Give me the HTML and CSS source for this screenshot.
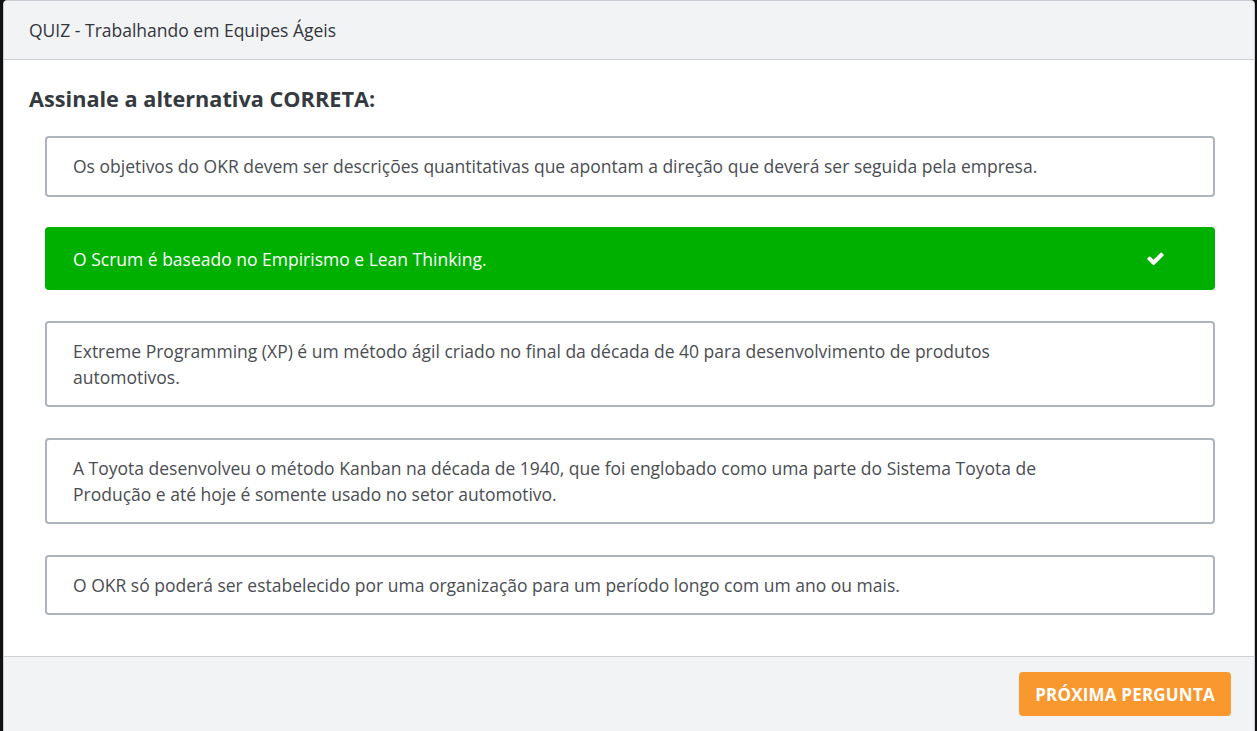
FILE: index.html
```html
<!DOCTYPE html>
<html lang="pt-BR">
<head>
<meta charset="utf-8">
<title>QUIZ - Trabalhando em Equipes Ágeis</title>
<link rel="stylesheet" href="styles.css">
</head>
<body>
<div class="modal">
  <div class="modal-header">QUIZ - Trabalhando em Equipes Ágeis</div>
  <div class="modal-body">
    <h2 class="question">Assinale a alternativa CORRETA:</h2>
    <ul class="options">
      <li class="option"><span class="option-text">Os objetivos do OKR devem ser descrições quantitativas que apontam a direção que deverá ser seguida pela empresa.</span></li>
      <li class="option correct"><span class="option-text">O Scrum é baseado no Empirismo e Lean Thinking.</span>
        <svg class="check" viewBox="0 0 1792 1792" width="19" height="19" aria-hidden="true"><path fill="#fff" d="M1671 566q0 40-28 68l-724 724-136 136q-28 28-68 28t-68-28l-136-136-362-362q-28-28-28-68t28-68l136-136q28-28 68-28t68 28l294 295 656-657q28-28 68-28t68 28l136 136q28 28 28 68z"/></svg>
      </li>
      <li class="option"><span class="option-text">Extreme Programming (XP) é um método ágil criado no final da década de 40 para desenvolvimento de produtos automotivos.</span></li>
      <li class="option"><span class="option-text">A Toyota desenvolveu o método Kanban na década de 1940, que foi englobado como uma parte do Sistema Toyota de Produção e até hoje é somente usado no setor automotivo.</span></li>
      <li class="option"><span class="option-text">O OKR só poderá ser estabelecido por uma organização para um período longo com um ano ou mais.</span></li>
    </ul>
  </div>
  <div class="modal-footer">
    <button class="next-btn" type="button">PRÓXIMA PERGUNTA</button>
  </div>
</div>
</body>
</html>
```
FILE: styles.css
```css
* { box-sizing: border-box; }
html, body {
  margin: 0;
  padding: 0;
  height: 100%;
  overflow: hidden;
}
body {
  background: #111;
  font-family: "Open Sans", "Noto Sans", Arial, sans-serif;
  color: #444;
}
.modal {
  margin-left: 3px;
  width: 1252px;
  min-height: 760px;
  background: #fff;
  border: 1px solid #c9ced4;
  border-radius: 4px;
  overflow: hidden;
  display: flex;
  flex-direction: column;
}
.modal-header {
  background: #f2f3f5;
  border-bottom: 1px solid #cdd1d6;
  padding: 17px 25px 17px;
  font-size: 17.5px;
  line-height: 24px;
  color: #33373d;
}
.modal-body {
  padding: 23px 25px 10px;
}
.question {
  margin: 0 0 22px;
  font-size: 21.7px;
  line-height: 31px;
  font-weight: 700;
  color: #343a40;
}
.options {
  list-style: none;
  margin: 0;
  padding: 0 14px 0 16px;
  display: flex;
  flex-direction: column;
  gap: 30.5px;
}
.option {
  display: flex;
  align-items: center;
  border: 2px solid #adb4bb;
  border-radius: 4px;
  padding: 15.3px 26px;
  font-size: 17.5px;
  line-height: 26px;
  color: #4a4d52;
}
.option-text {
  flex: 1;
  max-width: 990px;
}
.option.correct {
  background: #00b000;
  border-color: #00b000;
  color: #fff;
  padding-top: 16.5px;
  padding-bottom: 16.5px;
}
.check {
  display: block;
  margin-left: auto;
  margin-right: 22px;
}
.modal-footer {
  margin-top: 31px;
  flex: 1;
  background: #f2f3f5;
  border-top: 1px solid #cdd1d6;
  padding: 15px 23px 0 0;
  display: flex;
  justify-content: flex-end;
  align-items: flex-start;
}
.next-btn {
  width: 212px;
  height: 44px;
  border: none;
  border-radius: 4px;
  background: #f9982f;
  color: #fff;
  font-family: "Open Sans", "Noto Sans", Arial, sans-serif;
  font-weight: 700;
  font-size: 17px;
  letter-spacing: 0.2px;
  cursor: pointer;
}
```
